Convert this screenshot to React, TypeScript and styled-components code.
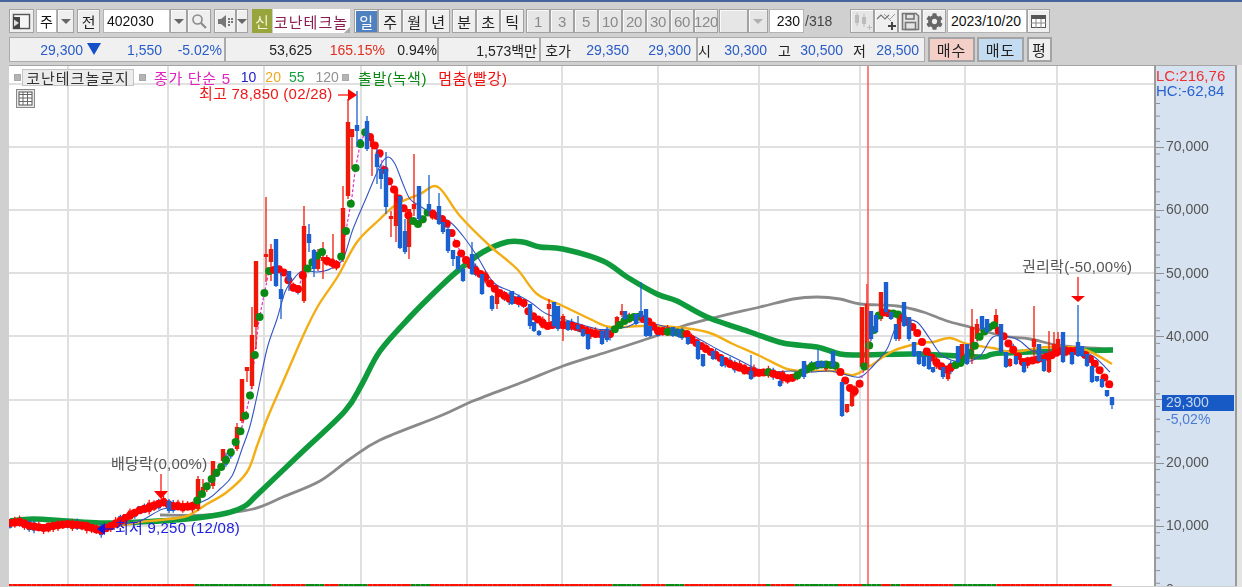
import React from 'react';
import styled, { createGlobalStyle } from 'styled-components';
import { FaCog } from 'react-icons/fa';

type Pt = [number, number];
type Candle = [number, number, number, number, number];

const FONT = `'Liberation Sans', 'Noto Sans CJK KR', sans-serif`;

const GlobalStyle = createGlobalStyle`
  html, body {
    margin: 0;
    height: 587px;
    overflow: hidden;
    background: #d0d0d0;
    font-family: ${FONT};
  }
`;

const Page = styled.div`
  width: 1242px;
  height: 587px;
  display: flex;
  flex-direction: column;
  overflow: hidden;
  border-top: 2px solid #46649e;
  box-sizing: border-box;
  filter: blur(0.4px);
`;

const Toolbar = styled.div`
  display: flex;
  align-items: stretch;
  height: 24px;
  margin-top: 7px;
  padding-left: 9px;
`;

const QuoteBar = styled(Toolbar)`
  height: 25px;
  margin-top: 4px;
`;

const Group = styled.div<{ $ml?: number }>`
  display: flex;
  margin-left: ${({ $ml }) => $ml ?? 0}px;
`;

const Btn = styled.div<{ $w?: number; $active?: boolean; $off?: boolean }>`
  width: ${({ $w }) => $w ?? 24}px;
  box-sizing: border-box;
  display: flex;
  align-items: center;
  justify-content: center;
  font-size: 15px;
  letter-spacing: -0.4px;
  color: ${({ $active, $off }) => ($active ? '#fff' : $off ? '#8a8a8a' : '#222')};
  background: ${({ $active, $off }) => ($active ? '#4f80c0' : $off ? '#e6e6e6' : '#efefef')};
  border: 1px solid #a2a2a2;
  box-shadow: inset 1px 1px 0 #fafafa;
`;

const Field = styled.div<{ $w: number; $right?: boolean }>`
  width: ${({ $w }) => $w}px;
  box-sizing: border-box;
  display: flex;
  align-items: center;
  justify-content: ${({ $right }) => ($right ? 'flex-end' : 'flex-start')};
  padding: 0 3px;
  font-size: 14px;
  color: #111;
  background: #fff;
  border: 1px solid #b4b4b4;
`;

const Caret = styled.span<{ $off?: boolean }>`
  width: 0;
  height: 0;
  border-left: 5px solid transparent;
  border-right: 5px solid transparent;
  border-top: 5px solid ${({ $off }) => ($off ? '#b0b0b0' : '#666')};
`;

const NewBadge = styled.div`
  width: 20px;
  display: flex;
  align-items: center;
  justify-content: center;
  background: #98a43c;
  color: #f4f4d8;
  font-size: 15px;
`;

const StockName = styled.div`
  position: relative;
  width: 77px;
  margin-left: 1px;
  padding-left: 1px;
  box-sizing: border-box;
  display: flex;
  align-items: center;
  overflow: hidden;
  white-space: nowrap;
  background: #fff;
  color: #8c1c52;
  font-size: 15px;
  letter-spacing: 1px;

  &::after {
    content: '';
    position: absolute;
    right: 0;
    bottom: 0;
    border-left: 6px solid transparent;
    border-bottom: 6px solid #aaa;
  }
`;

const Total = styled.span`
  width: 33px;
  display: flex;
  align-items: center;
  padding-left: 1px;
  font-size: 14px;
  color: #444;
`;

const StatGroup = styled.div<{ $w: number }>`
  width: ${({ $w }) => $w}px;
  box-sizing: border-box;
  display: flex;
  align-items: center;
  background: #f0f0f0;
  border: 1px solid #ababab;
  font-size: 14px;
`;

const Stat = styled.span<{ $w: number; $c?: string }>`
  width: ${({ $w }) => $w}px;
  flex: none;
  text-align: right;
  white-space: nowrap;
  color: ${({ $c }) => $c ?? '#222'};
`;

const DownMark = styled.span`
  display: inline-block;
  width: 0;
  height: 0;
  margin-left: 4px;
  border-left: 7px solid transparent;
  border-right: 7px solid transparent;
  border-top: 12px solid #1450c8;
`;

const TradeBtn = styled.div<{ $bg: string; $w: number; $ml: number }>`
  width: ${({ $w }) => $w}px;
  margin-left: ${({ $ml }) => $ml}px;
  box-sizing: border-box;
  display: flex;
  align-items: center;
  justify-content: center;
  letter-spacing: 1px;
  font-size: 15px;
  color: #222;
  background: ${({ $bg }) => $bg};
  border: 2px solid #a4a4a4;
`;

const ChartRow = styled.div`
  flex: 1;
  min-height: 0;
  display: flex;
  margin-top: 3px;
  padding-left: 9px;
`;

const Plot = styled.div`
  position: relative;
  width: 1145px;
  height: 521px;
  overflow: hidden;
  background: #fff;
  border-top: 1px solid #a4a4a4;
  box-sizing: border-box;
  flex: none;

  svg {
    display: block;
  }
`;

const Legend = styled.div`
  position: absolute;
  top: 2px;
  left: 5px;
  height: 18px;
  display: flex;
  align-items: center;
  font-size: 15px;
  white-space: nowrap;
`;

const Chip = styled.span<{ $ml?: number }>`
  width: 7px;
  height: 7px;
  margin-left: ${({ $ml }) => $ml ?? 0}px;
  background: #b4b4b4;
  border: 1px solid #e0e0e0;
  outline: 1px solid #a8a8a8;
  outline-offset: -1px;
  box-sizing: border-box;
  flex: none;
`;

const NameTag = styled.span`
  width: 112px;
  height: 17px;
  margin-left: 1px;
  display: flex;
  align-items: center;
  justify-content: center;
  box-sizing: border-box;
  background: #ececec;
  border: 1px solid #c4c4c4;
  color: #333;
  font-size: 15px;
  letter-spacing: 1px;
`;

const Lg = styled.span<{ $c: string; $ml: number }>`
  margin-left: ${({ $ml }) => $ml}px;
  color: ${({ $c }) => $c};
  letter-spacing: 0.7px;
`;

const LgNum = styled(Lg)`
  font-size: 14px;
  letter-spacing: 0;
`;

const Note = styled.span<{ $x: number; $y: number; $c: string }>`
  position: absolute;
  left: ${({ $x }) => $x}px;
  top: ${({ $y }) => $y}px;
  font-size: 15px;
  letter-spacing: 0.25px;
  line-height: 18px;
  white-space: nowrap;
  color: ${({ $c }) => $c};
`;

const GridBtn = styled.div`
  position: absolute;
  left: 7px;
  top: 23px;
  width: 19px;
  height: 19px;
  display: flex;
`;

const Axis = styled.div`
  position: relative;
  width: 83px;
  height: 521px;
  flex: none;
  box-sizing: border-box;
  overflow: hidden;
  background: #d6e2f0;
  border-top: 1px solid #a4a4a4;
  border-left: 2px solid #9a9a9a;
  border-right: 2px solid #9a9a9a;
`;

const EdgeStrip = styled.div`
  flex: 1;
  background: #e4e4e4;
`;

const AxisHead = styled.div`
  height: 32px;
  padding-top: 2px;
  box-sizing: border-box;
  font-size: 15px;
  line-height: 15px;
`;

const HeadLine = styled.div<{ $c: string }>`
  color: ${({ $c }) => $c};
`;

const AxisBody = styled.div`
  padding-top: 17.6px;
  background-image: linear-gradient(#8f8f8f 1px, transparent 1px);
  background-size: 4px 12.64px;
  background-repeat: repeat-y;
  background-position: 0 5px;
`;

const AxisRow = styled.div`
  position: relative;
  height: 63.2px;
  display: flex;
  align-items: center;
  padding-left: 10px;
  font-size: 14px;
  color: #555;

  span {
    position: relative;
    top: -1px;
  }

  &::before {
    content: '';
    position: absolute;
    left: 0;
    top: 31px;
    width: 8px;
    height: 1px;
    background: #8f8f8f;
  }
`;

const PriceTag = styled.div`
  position: absolute;
  left: 6px;
  top: 329px;
  width: 72px;
  height: 16px;
  padding-left: 4px;
  box-sizing: border-box;
  background: #175ac6;
  color: #c8d6ec;
  font-size: 14px;
  line-height: 14px;
`;

const PriceChange = styled.div`
  position: absolute;
  left: 10px;
  top: 346px;
  font-size: 14px;
  line-height: 15px;
  color: #4a7bd4;
`;

// page coords, read off the reference
const dotPath: Pt[] = [
  [10,524],[20,523],[30,527],[43,529],[53,527],[67,525],[80,526],[90,528],[100,532],[115,525],[127,518],[140,511],[153,507],[163,503],[173,507],[183,508],[193,507],
  [202,495],[210,482],[217,473],[222,467],[226,461],[231,453],[241,431],[246,414],[251,392],[255,354],[259,321],[264,296],[269,272],[280,270],[285,275],[292,288],[298,290],[303,276],[308,269],[317,257],[322,253],
  [327,262],[333,264],[337,266],[342,256],[347,226],[352,198],[355,172],[360,146],[365,133],[372,140],[375,147],[380,155],[384,170],[390,184],[395,192],[405,212],[413,222],[418,225],[424,219],[428,213],[434,215],[442,220],[448,226],[452,235],[457,246],
  [463,258],[468,263],[476,272],[485,278],[492,287],[498,293],[510,300],[523,303],[530,315],[540,322],[547,327],[557,325],[573,327],[583,330],[593,335],[610,335],[617,328],[627,320],[637,317],[648,322],[657,332],[673,333],[687,335],[693,342],[703,348],[717,357],[730,365],[743,370],[757,374],[768,373],[780,377],[790,380],[800,375],[810,368],[823,365],[837,367],
  [846,383],[852,392],[857,392],[862,378],[870,343],[875,328],[880,313],[887,314],[897,315],[902,318],[910,325],[918,335],[923,345],[928,355],[935,362],[942,368],[947,371],[953,367],[963,363],[973,350],[980,337],[987,330],[993,325],[1005,339],[1010,347],[1015,353],[1022,363],[1030,362],[1040,360],[1052,356],[1060,352],[1070,352],[1078,352],[1087,357],[1095,365],[1101,373],[1106,381],[1112,389],
];

const ma10: Pt[] = [
  [10,524],[100,528],[115,526],[140,522],[163,510],[187,508],[208,500],[220,490],[232,477],[242,450],[250,427],[257,397],[267,350],[277,320],[285,293],[292,282],[302,272],[317,273],[330,270],[343,260],[353,230],[367,197],[380,167],[388,158],[395,165],[403,185],[410,200],[420,207],[433,215],[450,223],[463,237],[477,257],[493,283],[510,292],[530,303],[547,315],[573,323],[597,330],[610,330],[627,328],[640,323],[667,328],[693,337],[717,350],[737,360],[757,370],[773,373],[790,372],[810,373],[830,372],[843,375],[860,378],[873,367],[887,350],[895,330],[903,322],[917,323],[930,340],[943,357],[963,363],[980,357],[993,338],[1010,338],[1020,342],[1033,352],[1050,353],[1077,352],[1093,357],[1110,373],
];

const ma20: Pt[] = [
  [115,528],[140,523],[160,521],[187,517],[207,505],[227,493],[247,473],[257,447],[267,420],[283,383],[303,337],[318,307],[338,277],[357,243],[380,220],[397,205],[420,195],[438,188],[460,217],[490,247],[517,270],[537,295],[563,307],[590,320],[610,328],[640,327],[673,328],[707,333],[733,345],[760,357],[787,370],[807,372],[833,372],[853,376],[870,367],[893,352],[920,344],[933,343],[950,339],[967,345],[993,349],[1013,353],[1047,348],[1083,350],[1112,365],
];

const ma55: Pt[] = [
  [10,522],[33,520],[67,522],[100,524],[140,523],[187,520],[227,514],[245,507],[258,495],[300,455],[345,412],[362,385],[380,352],[410,318],[440,288],[460,270],[483,253],[507,243],[523,243],[540,248],[563,250],[603,262],[627,278],[657,295],[677,302],[707,318],[750,333],[783,344],[817,348],[840,355],[860,356],[917,355],[980,358],[1003,354],[1113,351],
];

const ma120: Pt[] = [
  [160,516],[207,516],[253,510],[283,498],[320,482],[350,460],[380,441],[440,417],[473,402],[523,383],[563,367],[607,353],[653,338],[683,327],[717,318],[760,308],[793,300],[817,298],[840,300],[860,305],[897,307],[923,313],[947,322],[970,328],[1003,337],[1030,340],[1063,347],[1113,350],
];

const greenRuns: Pt[] = [[193,270],[303,325],[340,366],[411,430],[612,642],[665,682],[765,772],[796,840],[860,883],[893,900],[953,998]];

const redCandles: Candle[] = [
  [198,477,480,510,512],[203,480,488,492,495],[213,462,462,487,490],[223,450,450,462,465],[237,424,428,450,452],[242,380,380,422,424],[247,368,368,372,383],[252,308,336,387,390],[256,262,262,328,350],
  [266,198,255,258,283],[271,245,250,263,282],[304,207,227,302,304],[318,250,256,270,272],[323,243,258,262,280],[333,235,262,268,270],[343,187,209,257,263],[348,100,123,197,200],[352,130,130,138,170],
  [372,140,140,148,177],[391,212,217,220,238],[396,190,190,227,243],[409,210,210,248,260],[414,155,205,210,217],[549,300,305,310,327],[563,315,317,330,342],[497,292,292,305,310],[617,317,318,330,332],[622,305,312,316,318],
  [847,405,405,413,414],[852,388,388,407,408],[862,308,308,368,370],[867,285,305,368,370],[881,293,293,320,322],[899,317,317,340,342],[948,368,370,380,382],[962,345,345,363,365],[972,310,328,357,365],[977,320,325,340,342],[996,310,316,330,332],[1010,359,360,367,368],[1034,307,340,348,360],[1049,332,360,373,374],[1054,333,345,353,355],[1058,333,340,355,356],
];

const blueCandles: Candle[] = [
  [169,500,502,512,514],[276,240,240,287,288],[281,273,290,300,320],[289,272,272,282,292],[309,225,235,244,253],[314,250,251,270,278],[357,92,126,132,148],[367,117,122,150,152],[377,150,155,168,185],[381,165,170,180,190],[386,153,170,208,215],[400,197,197,249,250],[405,220,232,253,255],[419,187,187,220,222],[429,176,205,212,217],[439,194,207,225,226],[443,223,223,233,235],[448,227,230,252,254],[453,251,251,260,267],[458,257,257,270,272],[463,268,270,282,283],[472,243,255,275,276],[482,275,275,295,296],[492,296,297,310,312],[512,292,292,305,306],
  [530,305,305,327,330],[534,323,323,332,333],[539,331,332,336,337],[554,303,303,327,329],[558,307,307,330,332],[568,322,322,331,332],[578,317,326,330,333],[583,330,330,337,338],[588,335,335,350,351],[602,330,332,345,346],[607,328,330,341,343],[625,312,312,320,321],[636,315,315,325,326],[641,283,312,318,320],[646,310,310,337,338],[650,327,327,337,338],[673,328,328,337,338],[679,330,330,338,339],[688,338,338,345,346],[698,342,342,360,361],[703,355,355,367,368],[713,352,352,360,361],[722,357,357,367,368],[751,356,372,380,381],[780,380,382,387,388],[804,362,362,378,380],[818,350,362,368,370],[823,362,362,368,369],[833,352,352,368,369],[842,383,383,417,418],
  [871,312,312,340,342],[876,316,316,333,334],[886,283,283,313,315],[891,313,313,320,321],[896,325,325,340,342],[904,303,303,327,328],[909,318,318,340,342],[914,343,343,357,358],[919,352,352,365,366],[924,357,357,367,368],[929,357,357,370,371],[933,368,368,373,374],[943,368,368,378,380],[958,347,347,363,364],[967,345,345,365,366],[982,317,317,330,331],[987,320,320,333,334],[1001,325,325,353,354],[1006,353,353,368,369],[1016,357,357,365,366],[1024,363,363,373,374],[1039,345,345,362,363],[1044,360,360,372,373],[1063,333,333,363,364],[1072,353,353,365,366],[1078,306,343,357,358],[1082,347,347,357,358],[1087,355,355,367,368],[1092,367,367,383,384],[1097,377,377,382,383],[1102,380,380,388,389],[1107,391,391,397,398],[1112,398,398,406,410],
];

const gridX = [68, 168, 264, 361, 467, 562, 658, 759, 860, 965, 1057];
const gridY = [85, 148, 211, 274, 337, 401, 464, 527];
const axisLabels = ['70,000', '60,000', '50,000', '40,000', '', '20,000', '10,000', '0'];

const at = (pts: Pt[], x: number) => {
  for (let i = 1; i < pts.length; i++) {
    if (x <= pts[i][0]) {
      const [x0, y0] = pts[i - 1];
      const [x1, y1] = pts[i];
      return y0 + ((y1 - y0) * (x - x0)) / (x1 - x0);
    }
  }
  return pts[pts.length - 1][1];
};

const line = (pts: Pt[]) => pts.map((p) => p.join(',')).join(' ');

// catmull-rom through the read points, the averages have no corners in the reference
const smooth = (pts: Pt[]) => {
  let d = `M${pts[0][0]} ${pts[0][1]}`;
  for (let i = 0; i < pts.length - 1; i++) {
    const p0 = pts[Math.max(i - 1, 0)];
    const p1 = pts[i];
    const p2 = pts[i + 1];
    const p3 = pts[Math.min(i + 2, pts.length - 1)];
    const c1x = p1[0] + (p2[0] - p0[0]) / 6;
    const c1y = p1[1] + (p2[1] - p0[1]) / 6;
    const c2x = p2[0] - (p3[0] - p1[0]) / 6;
    const c2y = p2[1] - (p3[1] - p1[1]) / 6;
    d += ` C${c1x.toFixed(1)} ${c1y.toFixed(1)} ${c2x.toFixed(1)} ${c2y.toFixed(1)} ${p2[0]} ${p2[1]}`;
  }
  return d;
};

let seed = 7;
const rnd = () => {
  seed = (seed * 16807) % 2147483647;
  return seed / 2147483647;
};

const bars = Array.from({ length: 230 }, (_, i) => {
  const x = 10 + i * 4.8;
  return { x, y: at(dotPath, x), green: greenRuns.some(([a, b]) => x >= a && x <= b) };
});

const explicit = [...redCandles, ...blueCandles];
const filler = bars
  .filter((b) => !explicit.some((c) => Math.abs(c[0] - b.x) < 2.6))
  .map((b) => {
    const up = 2 + rnd() * 3;
    const down = 2 + rnd() * 3;
    return { x: b.x, wt: b.y - up - rnd() * 3, bt: b.y - up, bb: b.y + down, wb: b.y + down + rnd() * 3, blue: rnd() > 0.6 };
  });

const CandleMark = ({ c, color }: { c: Candle; color: string }) => (
  <g>
    <line x1={c[0]} x2={c[0]} y1={c[1]} y2={c[4]} stroke={color} strokeWidth={1.3} />
    <rect x={c[0] - 2.2} y={c[2]} width={4.4} height={c[3] - c[2]} fill={color} />
  </g>
);

const ChartDrawing = () => (
  <svg width={1145} height={520} viewBox="9 67 1145 520">
    {gridX.map((x) => (
      <line key={x} x1={x} x2={x} y1={67} y2={587} stroke="#e0e0e0" strokeWidth={2} />
    ))}
    {gridY.map((y) => (
      <line key={y} x1={9} x2={1154} y1={y} y2={y} stroke="#e0e0e0" strokeWidth={2} />
    ))}
    <path d={smooth(ma120)} fill="none" stroke="#8a8a8a" strokeWidth={2.8} />
    <path d={smooth(ma55)} fill="none" stroke="#0f9a3c" strokeWidth={5.5} />
    <path d={smooth(ma20)} fill="none" stroke="#f2ae14" strokeWidth={2.4} />
    <path d={smooth(ma10)} fill="none" stroke="#3454c4" strokeWidth={1.1} />
    <polyline points={line(dotPath)} fill="none" stroke="#e030c0" strokeWidth={1.2} strokeDasharray="3 2" />
    {filler.map((f) => (
      <CandleMark key={f.x} c={[f.x, f.wt, f.bt, f.bb, f.wb]} color={f.blue ? '#1a60d0' : '#f01808'} />
    ))}
    {redCandles.map((c) => (
      <CandleMark key={c[0]} c={c} color="#f01808" />
    ))}
    {bars.map((b) => (
      <circle key={b.x} cx={b.x} cy={b.y} r={4} fill={b.green ? '#0a8a14' : '#ff0000'} />
    ))}
    {blueCandles.map((c) => (
      <CandleMark key={c[0]} c={c} color="#1a60d0" />
    ))}
    <line x1={868} x2={868} y1={67} y2={587} stroke="#ff4a4a" strokeWidth={1.4} />
    {bars.map((b) => (
      <rect key={b.x} x={b.x - 2.4} y={585} width={4.8} height={2} fill={b.green ? '#0a8a14' : '#ff1000'} />
    ))}
    <line x1={161} x2={161} y1={475} y2={492} stroke="#f00" strokeWidth={1.2} />
    <polygon points="154,492 168,492 161,500" fill="#f00" />
    <line x1={1078} x2={1078} y1={278} y2={297} stroke="#f00" strokeWidth={1.2} />
    <polygon points="1071,297 1085,297 1078,303" fill="#f00" />
    <line x1={338} x2={349} y1={96} y2={96} stroke="#f00" strokeWidth={1.2} />
    <polygon points="348,90 348,102 357,96" fill="#f00" />
    <line x1={105} x2={115} y1={530} y2={530} stroke="#1414e0" strokeWidth={1.2} />
    <polygon points="105,524 105,536 97,530" fill="#1414e0" />
  </svg>
);

const LayoutIcon = () => (
  <svg width="19" height="17" viewBox="0 0 19 17">
    <rect x="1.5" y="1.5" width="16" height="14" fill="#f6f6f6" stroke="#555" strokeWidth="1.4" />
    <rect x="1" y="4" width="7" height="12" fill="#444" />
    <path d="M7 10 L2 6.5 V13.5 Z" fill="#ddd" />
  </svg>
);

const SearchIcon = () => (
  <svg width="16" height="16" viewBox="0 0 16 16" fill="none" stroke="#8a8a8a">
    <circle cx="6.5" cy="6.5" r="4.5" strokeWidth="1.6" />
    <line x1="10" y1="10" x2="15" y2="15" strokeWidth="2.2" />
  </svg>
);

const SpeakerIcon = () => (
  <svg width="17" height="15" viewBox="0 0 17 15" fill="#777">
    <path d="M1 5 H4 L9 1 V14 L4 10 H1 Z" />
    <rect x="11" y="4" width="2" height="2" />
    <rect x="14" y="4" width="2" height="2" />
    <rect x="11" y="7" width="2" height="2" />
    <rect x="14" y="7" width="2" height="2" />
    <rect x="11" y="10" width="2" height="2" />
  </svg>
);

const CandlesIcon = () => (
  <svg width="21" height="19" viewBox="0 0 21 19" fill="#bcbcbc">
    <rect x="3" y="3" width="4" height="8" />
    <rect x="4.5" y="1" width="1" height="13" />
    <rect x="10" y="5" width="4" height="7" />
    <rect x="11.5" y="2" width="1" height="13" />
    <path d="M15 15 h2 v-2 h1 v2 h2 v1 h-2 v2 h-1 v-2 h-2 z" />
  </svg>
);

const LinePlusIcon = () => (
  <svg width="21" height="19" viewBox="0 0 21 19" fill="none">
    <polyline points="1,7 5,3 9,7 13,3" stroke="#777" strokeWidth="1.2" />
    <polyline points="8,2 12,6 15,9" stroke="#999" strokeWidth="1" />
    <polyline points="13,8 19,2" stroke="#999" strokeWidth="1" />
    <path d="M12 13 h3 v-3 h2 v3 h3 v2 h-3 v3 h-2 v-3 h-3 z" fill="#444" />
  </svg>
);

const SaveIcon = () => (
  <svg width="19" height="19" viewBox="0 0 19 19" fill="none" stroke="#777" strokeWidth="1.6">
    <path d="M1.5 1.5 H15 L17.5 4 V17.5 H1.5 Z" fill="#e4e4e4" />
    <rect x="5" y="2" width="8" height="5" />
    <rect x="4.5" y="10.5" width="10" height="7" />
  </svg>
);

const CalendarIcon = () => (
  <svg width="15" height="13" viewBox="0 0 15 13">
    <rect x="0.5" y="0.5" width="14" height="12" fill="#fff" stroke="#555" />
    <rect x="0" y="0" width="15" height="4" fill="#555" />
    <path d="M0 8 H15 M5 4 V13 M10 4 V13" stroke="#888" />
  </svg>
);

const GridIcon = () => (
  <svg width="19" height="19" viewBox="0 0 19 19">
    <rect x="0.5" y="0.5" width="18" height="18" fill="#e8e8e8" stroke="#888" />
    <rect x="3" y="3" width="13" height="13" fill="#fff" stroke="#555" />
    <path d="M3 5.5 H16 M3 9 H16 M3 12.5 H16 M7 3 V16 M11.5 3 V16" stroke="#666" />
  </svg>
);

const App = () => (
  <Page>
    <GlobalStyle />
    <Toolbar>
      <Btn $w={25}>
        <LayoutIcon />
      </Btn>
      <Group $ml={2}>
        <Field $w={21}>주</Field>
        <Btn $w={17}>
          <Caret />
        </Btn>
      </Group>
      <Group $ml={3}>
        <Btn $w={23}>전</Btn>
      </Group>
      <Group $ml={3}>
        <Field $w={67}>402030</Field>
        <Btn $w={17}>
          <Caret />
        </Btn>
        <Btn $w={24}>
          <SearchIcon />
        </Btn>
      </Group>
      <Group $ml={3}>
        <Btn $w={22}>
          <SpeakerIcon />
        </Btn>
        <Btn $w={12}>
          <Caret />
        </Btn>
      </Group>
      <Group $ml={4}>
        <NewBadge>신</NewBadge>
        <StockName>코난테크놀</StockName>
      </Group>
      <Group $ml={4}>
        <Btn $active>일</Btn>
        <Btn>주</Btn>
        <Btn>월</Btn>
        <Btn>년</Btn>
      </Group>
      <Group $ml={2}>
        <Btn>분</Btn>
        <Btn>초</Btn>
        <Btn>틱</Btn>
      </Group>
      <Group $ml={2}>
        {['1', '3', '5', '10', '20', '30', '60', '120'].map((t) => (
          <Btn key={t} $off>
            {t}
          </Btn>
        ))}
      </Group>
      <Group $ml={1}>
        <Btn $w={29} $off />
        <Btn $w={20} $off>
          <Caret $off />
        </Btn>
      </Group>
      <Group $ml={1}>
        <Field $w={35} $right>
          230
        </Field>
        <Total>/318</Total>
      </Group>
      <Group $ml={12}>
        <Btn $off>
          <CandlesIcon />
        </Btn>
        <Btn>
          <LinePlusIcon />
        </Btn>
        <Btn>
          <SaveIcon />
        </Btn>
        <Btn>
          <FaCog size={17} color="#666" />
        </Btn>
      </Group>
      <Group $ml={1}>
        <Field $w={80}>2023/10/20</Field>
        <Btn $w={23}>
          <CalendarIcon />
        </Btn>
      </Group>
    </Toolbar>

    <QuoteBar>
      <StatGroup $w={216}>
        <Stat $w={91} $c="#2a5cc8">
          29,300
          <DownMark />
        </Stat>
        <Stat $w={61} $c="#2a5cc8">
          1,550
        </Stat>
        <Stat $w={60} $c="#2a5cc8">
          -5.02%
        </Stat>
      </StatGroup>
      <StatGroup $w={213}>
        <Stat $w={86}>53,625</Stat>
        <Stat $w={73} $c="#e03020">
          165.15%
        </Stat>
        <Stat $w={52}>0.94%</Stat>
      </StatGroup>
      <StatGroup $w={102}>
        <Stat $w={98}>1,573백만</Stat>
      </StatGroup>
      <StatGroup $w={157}>
        <Stat $w={30}>호가</Stat>
        <Stat $w={58} $c="#2a5cc8">
          29,350
        </Stat>
        <Stat $w={62} $c="#2a5cc8">
          29,300
        </Stat>
      </StatGroup>
      <StatGroup $w={228}>
        <Stat $w={13}>시</Stat>
        <Stat $w={56} $c="#2a5cc8">
          30,300
        </Stat>
        <Stat $w={24}>고</Stat>
        <Stat $w={52} $c="#2a5cc8">
          30,500
        </Stat>
        <Stat $w={23}>저</Stat>
        <Stat $w={53} $c="#2a5cc8">
          28,500
        </Stat>
      </StatGroup>
      <TradeBtn $bg="#f4cfc8" $w={47} $ml={3}>
        매수
      </TradeBtn>
      <TradeBtn $bg="#c4dcf2" $w={47} $ml={2}>
        매도
      </TradeBtn>
      <TradeBtn $bg="#efefef" $w={25} $ml={3}>
        평
      </TradeBtn>
    </QuoteBar>

    <ChartRow>
      <Plot>
        <ChartDrawing />
        <Legend>
          <Chip />
          <NameTag>코난테크놀로지</NameTag>
          <Chip $ml={5} />
          <Lg $c="#e020c0" $ml={8}>
            종가 단순 5
          </Lg>
          <LgNum $c="#2020c8" $ml={10}>
            10
          </LgNum>
          <LgNum $c="#f0a820" $ml={9}>
            20
          </LgNum>
          <LgNum $c="#18a040" $ml={8}>
            55
          </LgNum>
          <LgNum $c="#909090" $ml={11}>
            120
          </LgNum>
          <Chip $ml={3} />
          <Lg $c="#0a8a14" $ml={9}>
            출발(녹색)
          </Lg>
          <Lg $c="#f01010" $ml={11}>
            멈춤(빨강)
          </Lg>
        </Legend>
        <GridBtn>
          <GridIcon />
        </GridBtn>
        <Note $x={190} $y={19} $c="#f01818">
          최고 78,850 (02/28)
        </Note>
        <Note $x={102} $y={389} $c="#555">
          배당락(0,00%)
        </Note>
        <Note $x={106} $y={453} $c="#2020e0">
          최저 9,250 (12/08)
        </Note>
        <Note $x={1013} $y={192} $c="#555">
          권리락(-50,00%)
        </Note>
      </Plot>
      <Axis>
        <AxisHead>
          <HeadLine $c="#ee3030">LC:216,76</HeadLine>
          <HeadLine $c="#2a62d0">HC:-62,84</HeadLine>
        </AxisHead>
        <AxisBody>
          {axisLabels.map((t, i) => (
            <AxisRow key={i}>
              <span>{t}</span>
            </AxisRow>
          ))}
        </AxisBody>
        <PriceTag>29,300</PriceTag>
        <PriceChange>-5,02%</PriceChange>
      </Axis>
      <EdgeStrip />
    </ChartRow>
  </Page>
);

export default App;
